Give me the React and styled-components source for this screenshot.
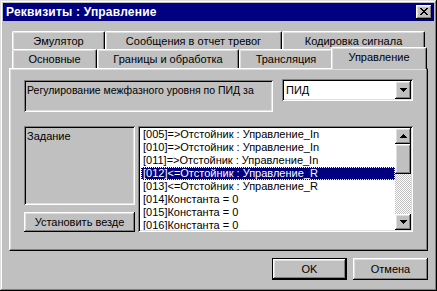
import React from 'react';
import styled, { createGlobalStyle, css } from 'styled-components';

const Global = createGlobalStyle`
  html, body { margin: 0; padding: 0; background: #c0c0c0; }
  body { font-family: "Liberation Sans", Arial, sans-serif; font-size: 11px; color: #000; }
  * { box-sizing: border-box; }
`;

const raised = css`
  box-shadow: inset -1px -1px #000, inset 1px 1px #fff, inset -2px -2px #808080, inset 2px 2px #dfdfdf;
`;
const sunken = css`
  box-shadow: inset 1px 1px #808080, inset -1px -1px #fff, inset 2px 2px #000, inset -2px -2px #dfdfdf;
`;

const Window = styled.div`
  width: 437px;
  height: 291px;
  background: #c0c0c0;
  padding: 3px;
  display: flex;
  flex-direction: column;
  box-shadow: inset -1px -1px #000, inset 1px 1px #dfdfdf, inset -2px -2px #808080, inset 2px 2px #fff;
`;

const TitleBar = styled.div`
  height: 18px;
  background: #000080;
  display: flex;
  align-items: center;
  justify-content: space-between;
  padding: 0 2px 0 3px;
`;

const Title = styled.span`
  color: #fff;
  font-weight: bold;
  font-size: 12px;
  letter-spacing: 0.2px;
`;

const CloseButton = styled.div`
  width: 16px;
  height: 14px;
  background: #c0c0c0;
  ${raised};
  display: flex;
  align-items: center;
  justify-content: center;
  padding-bottom: 1px;
`;

const Body = styled.div`
  flex: 1;
  display: flex;
  flex-direction: column;
  padding: 10px 6px 0 6px;
`;

const TabRow = styled.div`
  display: flex;
  height: ${p => p.$h}px;
  padding-left: 3px;
`;

const Tab = styled.div`
  width: ${p => p.$w}px;
  height: 100%;
  background: #c0c0c0;
  border-top: 1px solid #fff;
  border-left: 1px solid #fff;
  border-right: 1px solid #000;
  border-radius: 2px 2px 0 0;
  box-shadow: inset -1px 0 #808080, inset 1px 1px #dfdfdf;
  display: flex;
  align-items: center;
  justify-content: center;
  white-space: nowrap;
`;

const ActiveTab = styled(Tab)`
  position: relative;
  z-index: 2;
  height: auto;
  margin: -2px -2px -1px -2px;
  width: ${p => p.$w + 4}px;
  align-items: flex-start;
  padding-top: 3px;
`;

const Panel = styled.div`
  height: 183px;
  background: #c0c0c0;
  border-top: 1px solid #fff;
  border-left: 1px solid #fff;
  border-right: 1px solid #000;
  border-bottom: 1px solid #000;
  box-shadow: inset -1px -1px #808080, inset 1px 1px #dfdfdf;
  padding: 10px 14px 0 14px;
  display: flex;
  flex-direction: column;
  gap: 14px;
`;

const TopRow = styled.div`
  display: flex;
  align-items: flex-start;
  gap: 9px;
`;

const StaticBox = styled.div`
  width: ${p => p.$w}px;
  height: ${p => p.$h}px;
  margin-top: ${p => p.$mt || 0}px;
  ${sunken};
  padding: 4px 6px 0 3px;
  line-height: 13px;
`;

const StaticText = styled.div`
  white-space: nowrap;
  font-size: ${p => p.$fs || 11}px;
`;

const Combo = styled.div`
  width: 131px;
  height: 22px;
  background: #fff;
  ${sunken};
  padding: 2px;
  display: flex;
  align-items: stretch;
`;

const ComboText = styled.div`
  flex: 1;
  padding-left: 2px;
  display: flex;
  align-items: center;
`;

const ArrowButton = styled.div`
  width: 16px;
  height: ${p => p.$h || 16}px;
  background: #c0c0c0;
  ${raised};
  display: flex;
  align-items: center;
  justify-content: center;
  flex-shrink: 0;
`;

const BottomRow = styled.div`
  display: flex;
  gap: 3px;
`;

const LeftCol = styled.div`
  display: flex;
  flex-direction: column;
  gap: 7px;
`;

const Button = styled.div`
  width: ${p => p.$w}px;
  height: ${p => p.$h}px;
  background: #c0c0c0;
  ${raised};
  display: flex;
  align-items: center;
  justify-content: center;
  white-space: nowrap;
  ${p => p.$default && css`
    border: 1px solid #000;
  `}
`;

const ListBox = styled.div`
  width: 275px;
  height: 106px;
  background: #fff;
  ${sunken};
  padding: 2px;
  display: flex;
`;

const Items = styled.div`
  flex: 1;
  overflow: hidden;
  padding-left: 1px;
`;

const Item = styled.div`
  height: 13px;
  line-height: 13px;
  padding-left: 2px;
  white-space: nowrap;
  ${p => p.$sel && css`
    background: #000080;
    color: #fff;
    outline: 1px dotted #fff;
    outline-offset: -1px;
  `}
`;

const ScrollBar = styled.div`
  width: 16px;
  display: flex;
  flex-direction: column;
  background: repeating-conic-gradient(#c0c0c0 0 25%, #fff 0 50%) 0 0 / 2px 2px;
`;

const Thumb = styled.div`
  height: 30px;
  background: #c0c0c0;
  ${raised};
`;

const Track = styled.div`
  flex: 1;
`;

const Footer = styled.div`
  display: flex;
  justify-content: flex-end;
  gap: 6px;
  margin-top: 7px;
`;

const Arrow = ({ up }) => (
  <svg width="7" height="4" viewBox="0 0 7 4" shapeRendering="crispEdges">
    {up ? (
      <path d="M3 0h1v1h1v1h1v1h1v1H0V3h1V2h1V1h1z" fill="#000" />
    ) : (
      <path d="M0 0h7v1H6v1H5v1H4v1H3V3H2V2H1V1H0z" fill="#000" />
    )}
  </svg>
);

const CloseIcon = () => (
  <svg width="8" height="7" viewBox="0 0 8 7" shapeRendering="crispEdges">
    <path
      d="M0 0h2v1h1v1h2V1h1V0h2v1H7v1H6v1H5v1h1v1h1v1h1v1H6V6H5V5H3v1H2v1H0V6h1V5h1V4h1V3H2V2H1V1H0z"
      fill="#000"
    />
  </svg>
);

const items = [
  '[005]=>Отстойник : Управление_In',
  '[010]=>Отстойник : Управление_In',
  '[011]=>Отстойник : Управление_In',
  '[012]<=Отстойник : Управление_R',
  '[013]<=Отстойник : Управление_R',
  '[014]Константа = 0',
  '[015]Константа = 0',
  '[016]Константа = 0',
];

export default function App() {
  return (
    <>
      <Global />
      <Window>
        <TitleBar>
          <Title>Реквизиты : Управление</Title>
          <CloseButton><CloseIcon /></CloseButton>
        </TitleBar>
        <Body>
          <TabRow $h={18}>
            <Tab $w={93}>Эмулятор</Tab>
            <Tab $w={177}>Сообщения в отчет тревог</Tab>
            <Tab $w={143}>Кодировка сигнала</Tab>
          </TabRow>
          <TabRow $h={19}>
            <Tab $w={85}>Основные</Tab>
            <Tab $w={142}>Границы и обработка</Tab>
            <Tab $w={94}>Трансляция</Tab>
            <ActiveTab $w={92}>Управление</ActiveTab>
          </TabRow>
          <Panel>
            <TopRow>
              <StaticBox $w={249} $h={32} $mt={1}>
                <StaticText $fs={10.5}>Регулирование межфазного уровня по ПИД за</StaticText>
              </StaticBox>
              <Combo>
                <ComboText>ПИД</ComboText>
                <ArrowButton $h={18}><Arrow /></ArrowButton>
              </Combo>
            </TopRow>
            <BottomRow>
              <LeftCol>
                <StaticBox $w={111} $h={79}>
                  <StaticText>Задание</StaticText>
                </StaticBox>
                <Button $w={111} $h={20}>Установить везде</Button>
              </LeftCol>
              <ListBox>
                <Items>
                  {items.map((t, i) => (
                    <Item key={i} $sel={i === 3}>{t}</Item>
                  ))}
                </Items>
                <ScrollBar>
                  <ArrowButton><Arrow up /></ArrowButton>
                  <Thumb />
                  <Track />
                  <ArrowButton><Arrow /></ArrowButton>
                </ScrollBar>
              </ListBox>
            </BottomRow>
          </Panel>
          <Footer>
            <Button $w={75} $h={22} $default>OK</Button>
            <Button $w={75} $h={22}>Отмена</Button>
          </Footer>
        </Body>
      </Window>
    </>
  );
}
